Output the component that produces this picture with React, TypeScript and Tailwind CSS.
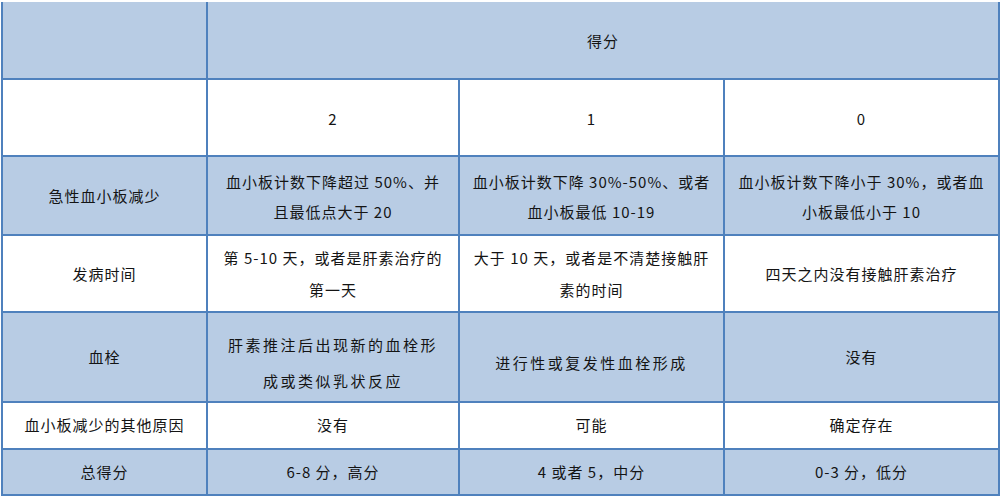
import React from "react";

const font = { fontFamily: '"Noto Sans CJK SC", "Noto Sans", sans-serif' };

function Cell({
  children,
  white,
  className = "",
}: {
  children?: React.ReactNode;
  white?: boolean;
  className?: string;
}) {
  return (
    <div
      className={`${white ? "bg-white" : "bg-[#b8cce4]"} flex flex-col items-center justify-center text-center text-[15px] tracking-[1px] text-[#141414] whitespace-nowrap ${className}`}
    >
      {children}
    </div>
  );
}

export default function App() {
  return (
    <div className="w-[1000px] h-[500px] bg-white pt-[2px]" style={font}>
      <div className="ml-[1px] w-[999px] bg-[#4f81bd] px-[2px] pb-[2px] grid grid-cols-[203px_250px_263px_273px] grid-rows-[76px_75px_77px_75px_88px_45px_44px] gap-[2px]">
        {/* Row 1 */}
        <Cell />
        <Cell className="col-span-3 pt-[2px]">得分</Cell>
        {/* Row 2 */}
        <Cell white />
        <Cell white className="pt-[3px]">2</Cell>
        <Cell white className="pt-[3px]">1</Cell>
        <Cell white className="pt-[3px]">0</Cell>
        {/* Row 3 */}
        <Cell className="leading-[30px]">急性血小板减少</Cell>
        <Cell className="leading-[30px] pt-[2px]">
          <span>血小板计数下降超过 50%、并</span>
          <span>且最低点大于 20</span>
        </Cell>
        <Cell className="leading-[30px] pt-[2px]">
          <span>血小板计数下降 30%-50%、或者</span>
          <span>血小板最低 10-19</span>
        </Cell>
        <Cell className="leading-[30px] pt-[2px]">
          <span>血小板计数下降小于 30%，或者血</span>
          <span>小板最低小于 10</span>
        </Cell>
        {/* Row 4 */}
        <Cell white className="pt-[2px]">发病时间</Cell>
        <Cell white className="leading-[32px]">
          <span>第 5-10 天，或者是肝素治疗的</span>
          <span>第一天</span>
        </Cell>
        <Cell white className="leading-[32px]">
          <span>大于 10 天，或者是不清楚接触肝</span>
          <span>素的时间</span>
        </Cell>
        <Cell white className="pt-[2px]">四天之内没有接触肝素治疗</Cell>
        {/* Row 5 */}
        <Cell>血栓</Cell>
        <Cell className="leading-[36px] tracking-[2.5px] pt-[12px]">
          <span>肝素推注后出现新的血栓形</span>
          <span>成或类似乳状反应</span>
        </Cell>
        <Cell className="tracking-[2.5px] pt-[12px]">进行性或复发性血栓形成</Cell>
        <Cell>没有</Cell>
        {/* Row 6 */}
        <Cell white>血小板减少的其他原因</Cell>
        <Cell white>没有</Cell>
        <Cell white>可能</Cell>
        <Cell white>确定存在</Cell>
        {/* Row 7 */}
        <Cell>总得分</Cell>
        <Cell>6-8 分，高分</Cell>
        <Cell>4 或者 5，中分</Cell>
        <Cell>0-3 分，低分</Cell>
      </div>
    </div>
  );
}
